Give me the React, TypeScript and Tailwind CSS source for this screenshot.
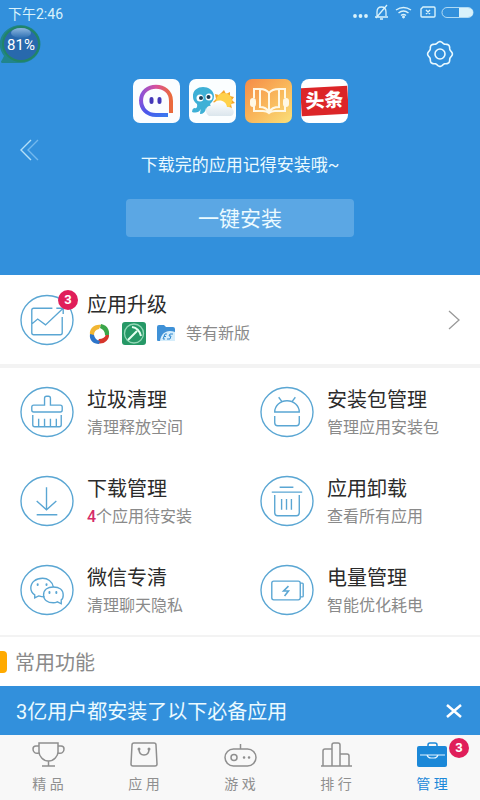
import type { ReactNode } from "react";

interface Feature {
  title: string;
  count?: string;
  note: string;
  icon: ReactNode;
}

interface Tab {
  label: string;
  icon: ReactNode;
  active?: boolean;
  badge?: number;
}

const features: Feature[] = [
  {
    title: "垃圾清理",
    note: "清理释放空间",
    icon: (
      <>
        <path d="M25 19v-7q0-2 2-2h2q2 0 2 2v7h10q2 0 2 2v3q0 2-2 2H14q-2 0-2-2v-3q0-2 2-2z" />
        <path d="M13 29v10q0 2 2 2h25q2 0 2-2V29M19 41v-8M25 41v-8M31 41v-8M37 41v-8" />
      </>
    ),
  },
  {
    title: "安装包管理",
    note: "管理应用安装包",
    icon: (
      <>
        <path d="M15 26a12.500 11.500 0 0 1 25 0zM22 15l-3-4M33 15l3-4" />
        <path d="M15 30v7q0 3 3 3h19q3 0 3-3v-7" />
      </>
    ),
  },
  {
    title: "下载管理",
    count: "4",
    note: "个应用待安装",
    icon: <path d="M27 12v23M17 26l10 9 10-9M17 40h21" />,
  },
  {
    title: "应用卸载",
    note: "查看所有应用",
    icon: (
      <>
        <path d="M20 12h14M12 17h31M15 20v18q0 3 3 3h19q3 0 3-3V20" />
        <path d="M22 24v11M27 24v11M32 24v11" />
      </>
    ),
  },
  {
    title: "微信专清",
    note: "清理聊天隐私",
    icon: (
      <>
        <path d="M34 23c-1-6-6-9-11-9-7 0-12 4-12 10 0 3 1 5 4 7v3l4-2q3 1 6 1" />
        <path d="M34 23c-6 0-10 3-10 8s4 8 10 8q2 0 4-1l4 2v-4c2-1 2-3 2-5 0-5-4-8-10-8z" />
        <path d="M18 20v1M27 20v1M30 28v1M37 28v1" strokeWidth="2" strokeLinecap="round" />
      </>
    ),
  },
  {
    title: "电量管理",
    note: "智能优化耗电",
    icon: (
      <>
        <rect x="12" y="17" width="29" height="19" rx="2" />
        <path d="M41 19h2q1 0 1 1v12q0 1-1 1h-2" />
        <path d="M29 22l-5 5h5l-4 5" strokeWidth="1.600" />
      </>
    ),
  },
];

const tabs: Tab[] = [
  {
    label: "精 品",
    icon: (
      <>
        <path d="M7 1h19v9c0 4-4 9-9.500 9S7 14 7 10zM16.500 19v5M10 24h13" />
        <path d="M7 4H4Q1 4 1 7c0 3 2 5 6 4M26 4h3q3 0 3 3c0 3-2 5-6 4" />
      </>
    ),
  },
  {
    label: "应 用",
    icon: (
      <>
        <path d="M6 1h20q2 0 2 2l1 19q0 2-2 2H5q-2 0-2-2L4 3q0-2 2-2z" />
        <path d="M11 7q0 6 5 6t5-6" />
        <path d="M11 7v.1M21 7v.1" strokeWidth="3" strokeLinecap="round" />
      </>
    ),
  },
  {
    label: "游 戏",
    icon: (
      <>
        <rect x="1" y="7" width="31" height="17" rx="8.500" />
        <path d="M16.500 7V2" />
        <circle cx="10" cy="15.500" r="3" />
        <path d="M20 15.500h.1M25 15.500h.1" strokeWidth="2.500" strokeLinecap="round" />
      </>
    ),
  },
  {
    label: "排 行",
    icon: <path d="M1 24h31M3 24V9q0-2 2-2h7M12 24V3q0-2 2-2h4q2 0 2 2v21M20 12h7q2 0 2 2v10" />,
  },
  {
    label: "管 理",
    active: true,
    badge: 3,
    icon: (
      <>
        <path d="M12 5V3q0-2 2-2h5q2 0 2 2v2" />
        <rect x="1" y="4" width="30" height="21" rx="2" fill="currentColor" stroke="none" />
        <path d="M4 13h25M11 13q1 3 4 3h3q3 0 4-3" stroke="#e4f4ff" strokeWidth="1.200" />
      </>
    ),
  },
];

// Eight shallow lobes around the settings icon
const gearPoints = Array.from({ length: 72 }, (_, i) => {
  const angle = (i / 72) * Math.PI * 2;
  const radius = 11.6 + 0.8 * Math.cos(angle * 8);
  return `${(14 + radius * Math.cos(angle)).toFixed(2)},${(14 + radius * Math.sin(angle)).toFixed(2)}`;
}).join(" ");

function StatusBar() {
  return (
    <div className="flex h-7 items-center justify-between pr-1 pl-2 text-[#d9f2fb]">
      <span className="text-sm leading-5">下午2:46</span>
      <svg width="124" height="20" viewBox="0 0 124 20" fill="none" stroke="currentColor">
        <g fill="currentColor" stroke="none">
          <circle cx="3" cy="12" r="1.900" />
          <circle cx="8.500" cy="12" r="1.900" />
          <circle cx="14" cy="12" r="1.900" />
        </g>
        <path d="M25 12V8q0-5 4.500-5T34 8v4M23 13h13M28 15h3M24 14L35 1" strokeWidth="1.300" />
        <path d="M44 6q7.500-5 15 0M46.500 9q5-4 10 0M49 11.500q2.500-2 5 0" strokeWidth="1.500" />
        <circle cx="51.500" cy="13" r="1" fill="currentColor" />
        <path d="M71 3h11q1 0 1 1v8q0 1-1 1H70q-1 0-1-1V5zM74 6l4 4M78 6l-4 4" strokeWidth="1.400" />
        <rect x="90" y="3.500" width="31" height="10" rx="5" strokeOpacity=".75" />
        <path d="M107 4h9q5 0 5 4.500T116 13h-9z" fill="currentColor" stroke="none" />
      </svg>
    </div>
  );
}

function MomoIcon() {
  return (
    <svg viewBox="0 0 47 44" className="h-11 w-[47px]">
      <defs>
        <linearGradient id="arc" x1="0" y1="0" x2="1" y2="0">
          <stop stopColor="#8a52d8" />
          <stop offset=".5" stopColor="#d8509c" />
          <stop offset="1" stopColor="#ea6a3c" />
        </linearGradient>
        <linearGradient id="tail" x1="0" y1="0" x2="1" y2="1">
          <stop stopColor="#8a52d8" />
          <stop offset=".5" stopColor="#4a55ea" />
          <stop offset="1" stopColor="#3a7af0" />
        </linearGradient>
      </defs>
      <rect width="47" height="44" rx="7" fill="#fbfdff" />
      <g fill="none" strokeWidth="4">
        <path d="M8 22C8 3 38 3 38 22v12" stroke="url(#arc)" />
        <path d="M8 21c0 9 6 15 15 15h12" stroke="url(#tail)" />
      </g>
      <path d="M18.500 20v3M26.500 20v3" stroke="#4337b8" strokeWidth="4" strokeLinecap="round" />
    </svg>
  );
}

function WeatherIcon() {
  return (
    <svg viewBox="0 0 47 44" className="h-11 w-[47px]">
      <defs>
        <linearGradient id="cloud" x1="0" y1="0" x2="0" y2="1">
          <stop stopColor="#fff" />
          <stop offset="1" stopColor="#dbe6ed" />
        </linearGradient>
      </defs>
      <rect width="47" height="44" rx="7" fill="#fbfeff" />
      <path
        d="M35 11l2 4 4-2v4l4 1-2 3 3 3-4 1 1 5-4-1-4 4-3-4-5 1 1-5-4-2 3-3-1-5 4 1z"
        fill="#f5a52a"
      />
      <circle cx="35" cy="22" r="8" fill="#ffd14a" />
      <path
        d="M4 18C3 5 24 5 25 17c0 4-2 6-4 8l3 8q-6 2-7-4-1 6-6 6 0-3 1-5-3 5-9 3 0-3 2-4 4 1 3-4-4-3-4-7z"
        fill="#3eb0d6"
      />
      <path d="M20 37c-6-5-2-12 3-10 3-8 14-7 15 1 7-1 9 7 4 9z" fill="url(#cloud)" />
      <circle cx="11" cy="19" r="3.500" fill="#fff" />
      <circle cx="20" cy="18" r="3.500" fill="#fff" />
      <circle cx="12" cy="19" r="2" fill="#183d55" />
      <circle cx="19.500" cy="18" r="2" fill="#183d55" />
    </svg>
  );
}

function ReaderIcon() {
  return (
    <svg viewBox="0 0 47 44" className="h-11 w-[47px]">
      <defs>
        <linearGradient id="page" x1="0" y1="0" x2="1" y2="1">
          <stop stopColor="#f58b47" />
          <stop offset=".5" stopColor="#f9b65a" />
          <stop offset="1" stopColor="#fae07a" />
        </linearGradient>
      </defs>
      <rect width="47" height="44" rx="7" fill="url(#page)" />
      <path
        d="M15 10v18q6 0 9 5 3-5 10-5V10q-7 0-10 4-3-4-9-4h-6v9M24 14v19M34 10h6v9M9 27v5h9q4 0 6 2 2-2 6-2h10v-5"
        fill="none"
        stroke="#fff8e4"
        strokeWidth="2"
      />
      <rect x="5" y="19" width="6" height="9" rx="3" fill="#fff8e4" />
      <rect x="38" y="19" width="6" height="9" rx="3" fill="#fff8e4" />
    </svg>
  );
}

function ToutiaoIcon() {
  return (
    <div className="flex h-11 w-[47px] flex-col justify-center overflow-hidden rounded-lg bg-white">
      <div className="-rotate-3 bg-[#dc2528] text-center text-[19px] leading-7 font-black text-white">头条</div>
    </div>
  );
}

function CircleIcon({ children }: { children: ReactNode }) {
  return (
    <svg
      width="54"
      height="52"
      viewBox="0 0 55 52"
      className="shrink-0"
      fill="none"
      stroke="#5aa6d3"
      strokeWidth="1.400"
    >
      <ellipse cx="27.500" cy="26" rx="26.500" ry="25" />
      {children}
    </svg>
  );
}

function Badge({ count }: { count: number }) {
  return (
    <span className="flex size-5 items-center justify-center rounded-full bg-[#e01e5a] text-[13px] leading-5 font-bold text-white">
      {count}
    </span>
  );
}

function Hero() {
  return (
    <header className="relative bg-[#3290dc] pb-[38px] text-[#ebfaff]">
      <StatusBar />
      {/* Floating memory usage bubble */}
      <div className="absolute top-6 left-0">
        <svg width="42" height="40" viewBox="0 0 42 40">
          <defs>
            <linearGradient id="shine" x1="0" y1="0" x2="0" y2="1">
              <stop stopColor="#8db7e0" />
              <stop offset="1" stopColor="#2d6fb3" />
            </linearGradient>
          </defs>
          <path d="M21 1a20 19 0 1 1-1 38H2q-2-1 0-3l2-4C-7 17 5 1 21 1z" fill="#21858c" />
          <ellipse cx="21" cy="20" rx="18" ry="17" fill="#2869ad" stroke="#218567" strokeWidth="2" />
          <ellipse cx="21" cy="9" rx="10" ry="5" fill="url(#shine)" />
        </svg>
        <span className="absolute inset-0 flex items-center justify-center pt-0.5 text-[15px] text-white">81%</span>
      </div>
      <div className="flex justify-end pt-3 pr-[26px]">
        <button aria-label="设置">
          <svg width="28" height="28" viewBox="0 0 28 28" fill="none" stroke="currentColor" strokeWidth="1.600">
            <polygon points={gearPoints} strokeLinejoin="round" />
            <circle cx="14" cy="14" r="5" />
          </svg>
        </button>
      </div>
      <div className="flex justify-center gap-[9px] pt-[11px]">
        <MomoIcon />
        <WeatherIcon />
        <ReaderIcon />
        <ToutiaoIcon />
      </div>
      <p className="pt-[30px] text-center text-[17px] leading-6">下载完的应用记得安装哦~</p>
      <button className="mx-auto mt-[22px] block h-[38px] w-[228px] rounded bg-[#5ba7e4] text-[21px] leading-10">
        一键安装
      </button>
      <button aria-label="上一页" className="absolute top-[139px] left-5">
        <svg width="20" height="22" viewBox="0 0 20 22" fill="none" strokeWidth="1.400">
          <path d="M11 1L1 11l10 10" stroke="#b5e0f8" />
          <path d="M18 1L8 11l10 10" stroke="#72b8ee" />
        </svg>
      </button>
    </header>
  );
}

function UpdateRow() {
  return (
    <a href="#updates" className="flex h-[93px] items-center border-b-4 border-[#f3f3f3] pr-5 pl-5">
      <div className="relative">
        <CircleIcon>
          <path d="M33 14H14q-2 0-2 2v23q0 2 2 2h27q2 0 2-2V23M12 30l6-5 8 6 18-17M37 14h7v6" />
        </CircleIcon>
        <div className="absolute -top-1 -right-1">
          <Badge count={3} />
        </div>
      </div>
      <div className="ml-[13px] flex-1 pb-0.5">
        <div className="text-xl leading-7">应用升级</div>
        <div className="flex items-center gap-[11px] pt-[3px]">
          <svg width="24" height="24" viewBox="0 0 24 24">
            <path d="M3 13C2 7 7 2 14 3l-2 4q-5 1-5 6z" fill="#f2b632" />
            <path d="M14 2c7 1 10 8 7 14l-3-3q0-5-5-7z" fill="#3ba549" />
            <path d="M22 13c0 6-6 10-12 8l2-4q5 0 7-4z" fill="#d6352b" />
            <path d="M12 22C6 22 2 18 3 12l4 1q1 5 6 6z" fill="#2c74c9" />
          </svg>
          <svg width="24" height="24" viewBox="0 0 24 24" fill="none" stroke="#e5fff0">
            <rect width="24" height="23" rx="3" fill="#269866" stroke="none" />
            <circle cx="12" cy="11.500" r="9.500" stroke="#91d7b5" strokeWidth="1.300" />
            <path d="M6 18l9-9M10 5q7 1 9 9" strokeWidth="2" />
          </svg>
          <svg width="18" height="24" viewBox="0 0 18 24">
            <path d="M0 5q0-2 2-2h5l2 2h7q2 0 2 2v11q0 1-1 1H1q-1 0-1-1z" fill="#3f91d7" />
            <path d="M3 19C4 10 11 7 18 10v9z" fill="#d5edfb" />
            <path d="M10 12H8l-2 5h2M7 14.500h2M16 12h-3l-1 2h2l-1 3h-3" fill="none" stroke="#328bd2" />
          </svg>
          <span className="text-base leading-6 text-[#8a8a8a]">等有新版</span>
        </div>
      </div>
      <svg width="12" height="20" viewBox="0 0 12 20" fill="none" stroke="#999" strokeWidth="1.300">
        <path d="M1 1l10 9-10 9" />
      </svg>
    </a>
  );
}

function FeatureItem({ title, count, note, icon }: Feature) {
  return (
    <a href="#feature" className="flex h-[89px] items-center pb-0.5 pl-5">
      <CircleIcon>{icon}</CircleIcon>
      <div className="ml-[13px] pt-[3px]">
        <div className="text-xl leading-7">{title}</div>
        <div className="pt-0.5 text-base leading-6 text-[#8a8a8a]">
          {count && <span className="font-medium text-[#d62a68]">{count}</span>}
          {note}
        </div>
      </div>
    </a>
  );
}

export default function App() {
  return (
    <div className="flex min-h-screen flex-col bg-white font-['Roboto','Noto_Sans_CJK_SC',sans-serif] text-[#2b2b2b]">
      <Hero />
      <main className="flex-1">
        <UpdateRow />
        <section className="grid grid-cols-2 border-b-2 border-[#f3f3f3]">
          {features.map((feature) => (
            <FeatureItem key={feature.title} {...feature} />
          ))}
        </section>
        <div className="flex h-[49px] items-center gap-2">
          <span className="h-[22px] w-[7px] rounded-r bg-[#ffaa00]" />
          <h2 className="pt-[3px] text-xl leading-7 text-[#8a8a8a]">常用功能</h2>
        </div>
      </main>
      <div className="flex h-[49px] items-center justify-between bg-[#3290dc] pr-[18px] pl-4 text-[#ebfaff]">
        <span className="pt-[3px] text-xl leading-7">3亿用户都安装了以下必备应用</span>
        <button aria-label="关闭">
          <svg width="16" height="16" viewBox="0 0 16 16" stroke="#fff" strokeWidth="2.500">
            <path d="M1 2l14 12M15 2L1 14" />
          </svg>
        </button>
      </div>
      <nav className="grid h-[65px] grid-cols-5 bg-[#f8f8f8] text-[#8f8f8f]">
        {tabs.map((tab) => (
          <a
            key={tab.label}
            href="#tab"
            className={`relative flex flex-col items-center pt-[7px] text-sm leading-5 ${tab.active ? "text-[#1b88d8]" : ""}`}
          >
            <svg width="33" height="28" viewBox="0 0 33 28" fill="none" stroke="currentColor" strokeWidth="1.500">
              {tab.icon}
            </svg>
            <span className="pt-1">{tab.label}</span>
            {tab.badge && (
              <div className="absolute top-[3px] right-[11px]">
                <Badge count={tab.badge} />
              </div>
            )}
          </a>
        ))}
      </nav>
    </div>
  );
}
